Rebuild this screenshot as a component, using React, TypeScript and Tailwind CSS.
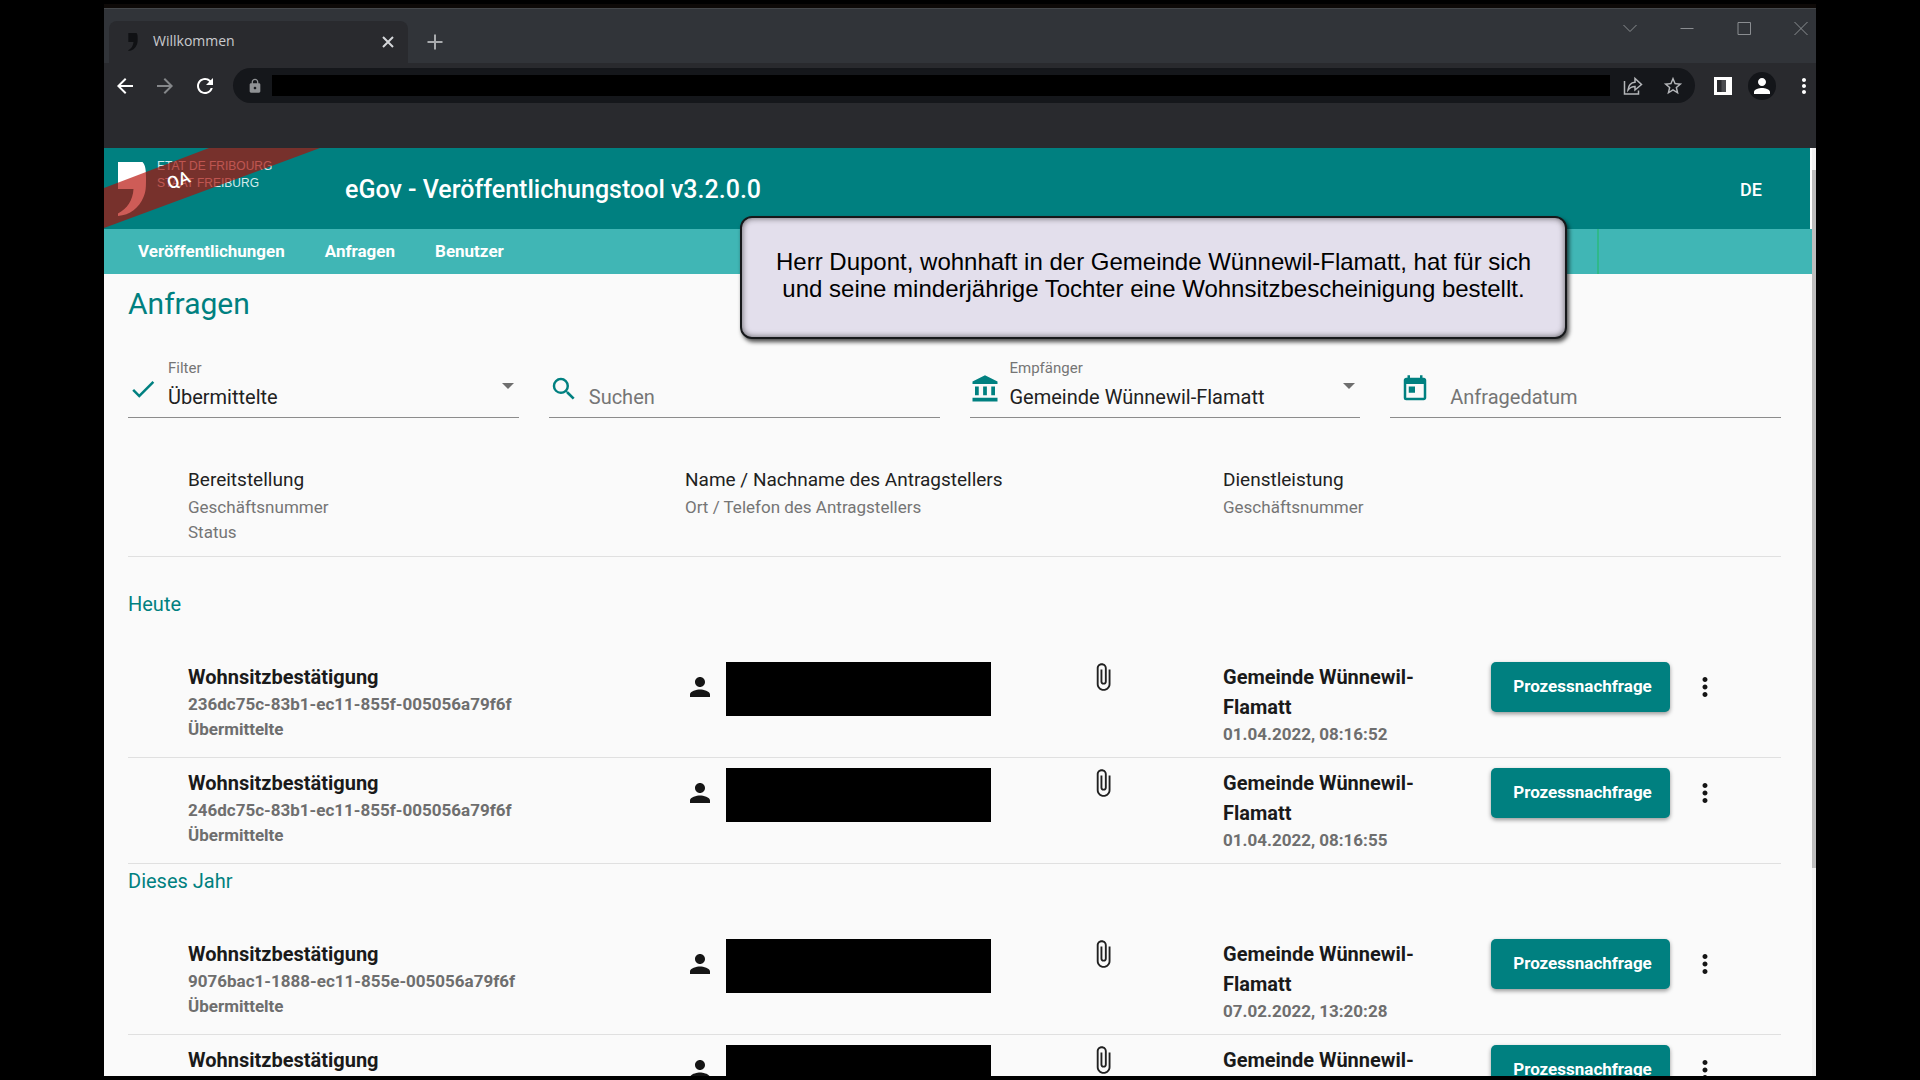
import React, { useState } from "react";
import {
    MdAccountBalance,
    MdArrowBack,
    MdArrowForward,
    MdAttachFile,
    MdCheck,
    MdLock,
    MdMoreVert,
    MdPerson,
    MdRefresh,
    MdSearch,
    MdStarBorder,
    MdToday,
} from "react-icons/md";

type Request = {
    id: string;
    title: string;
    status: string;
    recipient: string;
    date: string;
};

type Group = {
    label: string;
    requests: Request[];
};

const groups: Group[] = [
    {
        label: "Heute",
        requests: [
            {
                id: "236dc75c-83b1-ec11-855f-005056a79f6f",
                title: "Wohnsitzbestätigung",
                status: "Übermittelte",
                recipient: "Gemeinde Wünnewil-Flamatt",
                date: "01.04.2022, 08:16:52",
            },
            {
                id: "246dc75c-83b1-ec11-855f-005056a79f6f",
                title: "Wohnsitzbestätigung",
                status: "Übermittelte",
                recipient: "Gemeinde Wünnewil-Flamatt",
                date: "01.04.2022, 08:16:55",
            },
        ],
    },
    {
        label: "Dieses Jahr",
        requests: [
            {
                id: "9076bac1-1888-ec11-855e-005056a79f6f",
                title: "Wohnsitzbestätigung",
                status: "Übermittelte",
                recipient: "Gemeinde Wünnewil-Flamatt",
                date: "07.02.2022, 13:20:28",
            },
            {
                id: "9176bac1-1888-ec11-855e-005056a79f6f",
                title: "Wohnsitzbestätigung",
                status: "Übermittelte",
                recipient: "Gemeinde Wünnewil-Flamatt",
                date: "07.02.2022, 13:20:25",
            },
        ],
    },
];

const QuoteMark = ({ className }: { className: string }) => (
    <svg viewBox="0 0 28 54" className={className} fill="currentColor">
        <path d="M0 0H24.500C27.500 3 28 8 28 16C28 24 28 30 25.500 35C21 46 12 53 0 54V51.500C9 47 15 38 15.500 27H0Z" />
    </svg>
);

const TabStrip = () => (
    <div className="flex h-[54px] justify-between bg-[#313439] pl-[5px]">
        <div className="flex items-end">
            <div className="flex h-[42px] w-[299px] items-center rounded-t-lg bg-[#292a2e] pr-[14px] pl-[19px]">
                <QuoteMark className="h-[18px] w-[10px] text-[#101114]" />
                <span className="ml-[15px] flex-1 pb-[2px] font-['Open_Sans',sans-serif] text-sm leading-5 text-[#c9cbce]">
                    Willkommen
                </span>
                <button type="button" aria-label="Tab schliessen">
                    <svg viewBox="0 0 12 12" className="size-3" stroke="#d5d7da" strokeWidth="2">
                        <path d="M1 1L11 11M11 1L1 11" />
                    </svg>
                </button>
            </div>
            <button type="button" aria-label="Neuer Tab" className="ml-[19px] flex h-[42px] items-center">
                <svg viewBox="0 0 16 16" className="size-4" stroke="#a9abae" strokeWidth="2">
                    <path d="M8 0.500V15.500M0.500 8H15.500" />
                </svg>
            </button>
        </div>
        <div className="flex items-start gap-[43px] pt-3 pr-2 text-[#8a8d91]">
            <button type="button" aria-label="Tabs suchen">
                <svg viewBox="0 0 14 14" className="size-[14px]" fill="none" stroke="currentColor">
                    <path d="M0.500 4L7 10.500L13.500 4" />
                </svg>
            </button>
            <button type="button" aria-label="Minimieren">
                <svg viewBox="0 0 14 14" className="size-[14px]" fill="none" stroke="currentColor">
                    <path d="M0.500 7.500H13.500" />
                </svg>
            </button>
            <button type="button" aria-label="Maximieren">
                <svg viewBox="0 0 14 14" className="size-[14px]" fill="none" stroke="currentColor">
                    <path d="M1 1.500H13.500V13.500H1Z" />
                </svg>
            </button>
            <button type="button" aria-label="Schliessen">
                <svg viewBox="0 0 14 14" className="size-[14px]" fill="none" stroke="currentColor">
                    <path d="M0.500 1L13.500 14M13.500 1L0.500 14" />
                </svg>
            </button>
        </div>
    </div>
);

const Toolbar = () => (
    <div className="flex h-[85px] items-start gap-4 bg-[#292a2e] pt-[5px] pl-[9px] text-white">
        <div className="flex h-[35px] items-center gap-4">
            <button type="button" aria-label="Zurück">
                <MdArrowBack className="size-6" />
            </button>
            <button type="button" aria-label="Vorwärts" className="text-[#85878a]">
                <MdArrowForward className="size-6" />
            </button>
            <button type="button" aria-label="Neu laden">
                <MdRefresh className="size-6" />
            </button>
        </div>
        <div className="flex h-[35px] flex-1 items-center rounded-full bg-[#15171b] pr-[11px] pl-[14px] text-[#b4b6b9]">
            <MdLock className="size-4 text-[#8f9194]" />
            <input
                type="text"
                aria-label="Adresse"
                className="mx-[9px] h-[21px] min-w-0 flex-1 bg-black text-sm outline-none"
            />
            <button type="button" aria-label="Teilen" className="mr-[19px] ml-1">
                <svg viewBox="0 0 20 20" className="size-5" fill="none" stroke="currentColor" strokeWidth="1.500">
                    <path d="M1.500 5V18H15.500V14.500" />
                    <path d="M5 14C5.500 9 8 6.500 12 6.200V2.500L18.500 8.500L12 14V10.500C9 10.500 7 11.500 5 14Z" />
                </svg>
            </button>
            <button type="button" aria-label="Lesezeichen">
                <MdStarBorder className="size-[22px]" />
            </button>
        </div>
        <div className="flex h-[35px] items-center gap-4">
            <button type="button" aria-label="Seitenleiste" className="ml-[3px]">
                <svg viewBox="0 0 18 18" className="size-[18px]">
                    <path d="M0 0H18V18H0Z" fill="#fff" />
                    <path d="M3 3H12V15H3Z" fill="#292a2e" />
                    <path d="M7.500 3H12V15H7.500Z" fill="#4a4b4f" />
                </svg>
            </button>
            <button
                type="button"
                aria-label="Profil"
                className="flex size-7 items-center justify-center rounded-full bg-[#131519]"
            >
                <MdPerson className="size-6" />
            </button>
            <button type="button" aria-label="Menü">
                <MdMoreVert className="size-6" />
            </button>
        </div>
    </div>
);

const AppHeader = () => (
    <header>
        <div className="relative flex h-[81px] items-center border-r-2 border-white bg-[#008080] pt-[2px] pr-12 pl-[14px] text-white">
            <div className="flex w-[227px] items-start gap-[11px] pb-[5px]">
                <QuoteMark className="mt-1 h-[54px] w-7" />
                <p className="font-['Liberation_Sans',sans-serif] text-xs leading-[17px] text-[#d4ebeb]">
                    ETAT DE FRIBOURG
                    <br />
                    STAAT FREIBURG
                </p>
            </div>
            <h1 className="flex-1 text-[25px] leading-8 font-medium">eGov - Veröffentlichungstool v3.2.0.0</h1>
            <button type="button" className="text-lg font-medium">
                DE
            </button>
            {/* environment ribbon */}
            <svg viewBox="0 0 216 81" className="absolute top-0 left-0 h-[81px] w-[216px]">
                <polygon points="105,0 216,0 0,80 0,40" fill="#b50800" fillOpacity="0.66" />
            </svg>
            <span className="absolute top-5 left-[63px] -rotate-20 text-[17px] leading-6 font-medium">QA</span>
        </div>
        <nav className="flex h-[45px] items-stretch justify-between bg-[#40b6b5] pl-[34px]">
            <div className="flex items-center gap-10 text-[17px] font-bold text-white">
                <a href="#veroeffentlichungen">Veröffentlichungen</a>
                <a href="#anfragen">Anfragen</a>
                <a href="#benutzer">Benutzer</a>
            </div>
            <div className="w-[215px] border-l-2 border-[#2fb98a]" />
        </nav>
    </header>
);

type FieldProps = {
    id: string;
    label?: string;
    icon: React.ReactNode;
    children: React.ReactNode;
};

const Field = ({ id, label, icon, children }: FieldProps) => (
    <div className="flex h-[59px] items-center gap-[10px] border-b border-[#8c8c8c] text-[#008080]">
        <div className="pt-[2px]">{icon}</div>
        <div className="flex h-full min-w-0 flex-1 flex-col justify-between pb-[5px]">
            <label htmlFor={id} className="h-[18px] text-[15px] leading-[18px] text-[#757575]">
                {label}
            </label>
            {children}
        </div>
        {label && (
            <svg viewBox="0 0 12 6" className="mr-[5px] mb-1 h-[6px] w-3" fill="#6e6e6e">
                <path d="M0 0H12L6 6Z" />
            </svg>
        )}
    </div>
);

const Filters = () => {
    const [search, setSearch] = useState("");
    const [date, setDate] = useState("");

    return (
        <form className="mt-[35px] grid grid-cols-4 gap-[30px]">
            <Field id="filter" label="Filter" icon={<MdCheck className="size-[30px]" />}>
                <select id="filter" className="h-[30px] appearance-none text-[20px] leading-[30px] text-[#212121] outline-none">
                    <option>Übermittelte</option>
                </select>
            </Field>
            <Field id="search" icon={<MdSearch className="size-[30px]" />}>
                <input
                    id="search"
                    type="text"
                    placeholder="Suchen"
                    value={search}
                    onChange={(e) => setSearch(e.target.value)}
                    className="h-[30px] text-[20px] text-[#212121] outline-none placeholder:text-[#757575]"
                />
            </Field>
            <Field id="recipient" label="Empfänger" icon={<MdAccountBalance className="size-[30px]" />}>
                <select id="recipient" className="h-[30px] appearance-none text-[20px] leading-[30px] text-[#212121] outline-none">
                    <option>Gemeinde Wünnewil-Flamatt</option>
                </select>
            </Field>
            <Field
                id="date"
                icon={
                    <button type="button" aria-label="Kalender öffnen" className="block px-[10px]">
                        <MdToday className="size-[30px]" />
                    </button>
                }
            >
                <input
                    id="date"
                    type="text"
                    placeholder="Anfragedatum"
                    value={date}
                    onChange={(e) => setDate(e.target.value)}
                    className="h-[30px] text-[20px] text-[#212121] outline-none placeholder:text-[#757575]"
                />
            </Field>
        </form>
    );
};

const RequestRow = ({ request }: { request: Request }) => (
    <tr className="h-[106px] align-top font-bold [&>td]:border-b [&>td]:border-[#e0e0e0] [&>td]:py-[10px]">
        <td className="pl-[60px]">
            <p className="text-[20px] leading-[30px] text-[#1a1a1a]">{request.title}</p>
            <p className="text-[17px] leading-[25px] text-[#6e6e6e]">{request.id}</p>
            <p className="text-[17px] leading-[25px] text-[#6e6e6e]">{request.status}</p>
        </td>
        <td>
            <div className="flex gap-[11px]">
                <MdPerson className="mt-[10px] size-[30px] text-[#151515]" />
                <div className="h-[54px] w-[265px] bg-black" />
            </div>
        </td>
        <td>
            <MdAttachFile className="size-[30px] text-[#212121]" />
        </td>
        <td className="pr-10">
            <p className="text-[20px] leading-[30px] text-[#1a1a1a]">{request.recipient}</p>
            <p className="text-[17px] leading-[25px] text-[#6e6e6e]">{request.date}</p>
        </td>
        <td>
            <div className="flex items-center gap-5">
                <button
                    type="button"
                    className="h-[50px] w-[179px] rounded-[5px] bg-[#008080] pl-1 text-[17px] font-bold text-white shadow-[0_2px_4px_rgba(0,0,0,0.4)]"
                >
                    Prozessnachfrage
                </button>
                <button type="button" aria-label="Weitere Aktionen" className="text-[#151515]">
                    <MdMoreVert className="size-[30px]" />
                </button>
            </div>
        </td>
    </tr>
);

const RequestTable = () => (
    <table className="mt-9 w-full table-fixed border-separate border-spacing-0 text-left">
        <colgroup>
            <col className="w-[557px]" />
            <col />
            <col className="w-[135px]" />
            <col className="w-[268px]" />
            <col className="w-[290px]" />
        </colgroup>
        <thead>
            <tr className="h-[103px] align-top text-[17px] leading-[25px] text-[#757575] [&>*]:border-b [&>*]:border-[#e0e0e0] [&>*]:pt-[11px]">
                <th className="pl-[60px] font-normal">
                    <p className="text-[19px] leading-[30px] text-[#212121]">Bereitstellung</p>
                    <p>Geschäftsnummer</p>
                    <p>Status</p>
                </th>
                <th className="font-normal">
                    <p className="text-[19px] leading-[30px] text-[#212121]">Name / Nachname des Antragstellers</p>
                    <p>Ort / Telefon des Antragstellers</p>
                </th>
                <td />
                <th className="font-normal">
                    <p className="text-[19px] leading-[30px] text-[#212121]">Dienstleistung</p>
                    <p>Geschäftsnummer</p>
                </th>
                <td />
            </tr>
            <tr className="h-[30px]">
                <td colSpan={5} />
            </tr>
        </thead>
        {groups.map((group) => (
            <tbody key={group.label}>
                <tr className="h-[65px] align-top">
                    <th colSpan={5} className="text-[20px] leading-[34px] font-normal text-[#008080]">
                        {group.label}
                    </th>
                </tr>
                {group.requests.map((request) => (
                    <RequestRow key={request.id} request={request} />
                ))}
            </tbody>
        ))}
    </table>
);

const App = () => {
    return (
        <div className="relative h-screen overflow-hidden bg-black px-[104px] py-1 font-[Roboto,sans-serif]">
            <div className="flex h-full flex-col overflow-hidden border-t-4 border-[#0d0907]">
                <div className="h-[1px] shrink-0 bg-[#45484b]" />
                <div className="shrink-0">
                    <TabStrip />
                    <Toolbar />
                </div>
                <div className="flex min-h-0 flex-1 bg-[#fafafa]">
                    <div className="min-w-0 flex-1 overflow-hidden">
                        <AppHeader />
                        <main className="pt-[10px] pr-[31px] pl-6">
                            <h2 className="text-3xl leading-10 text-[#008080]">Anfragen</h2>
                            <Filters />
                            <RequestTable />
                        </main>
                    </div>
                    <div className="w-1 bg-[#f1f1f1] pt-[22px]">
                        <div className="h-[77%] bg-[#bdbdbd]" />
                    </div>
                </div>
            </div>
            {/* caption */}
            <div className="absolute top-[216px] left-[740px] flex h-[123px] w-[827px] items-center justify-center rounded-xl border-2 border-[#16181a] bg-[#e3dfec] pb-[5px] text-center font-['Liberation_Sans',sans-serif] text-2xl leading-[27px] text-black shadow-[2px_3px_4px_rgba(0,0,0,0.7),inset_0_0_6px_rgba(0,0,0,0.6)]">
                <p>
                    Herr Dupont, wohnhaft in der Gemeinde Wünnewil-Flamatt, hat für sich
                    <br />
                    und seine minderjährige Tochter eine Wohnsitzbescheinigung bestellt.
                </p>
            </div>
        </div>
    );
};

export default App;
